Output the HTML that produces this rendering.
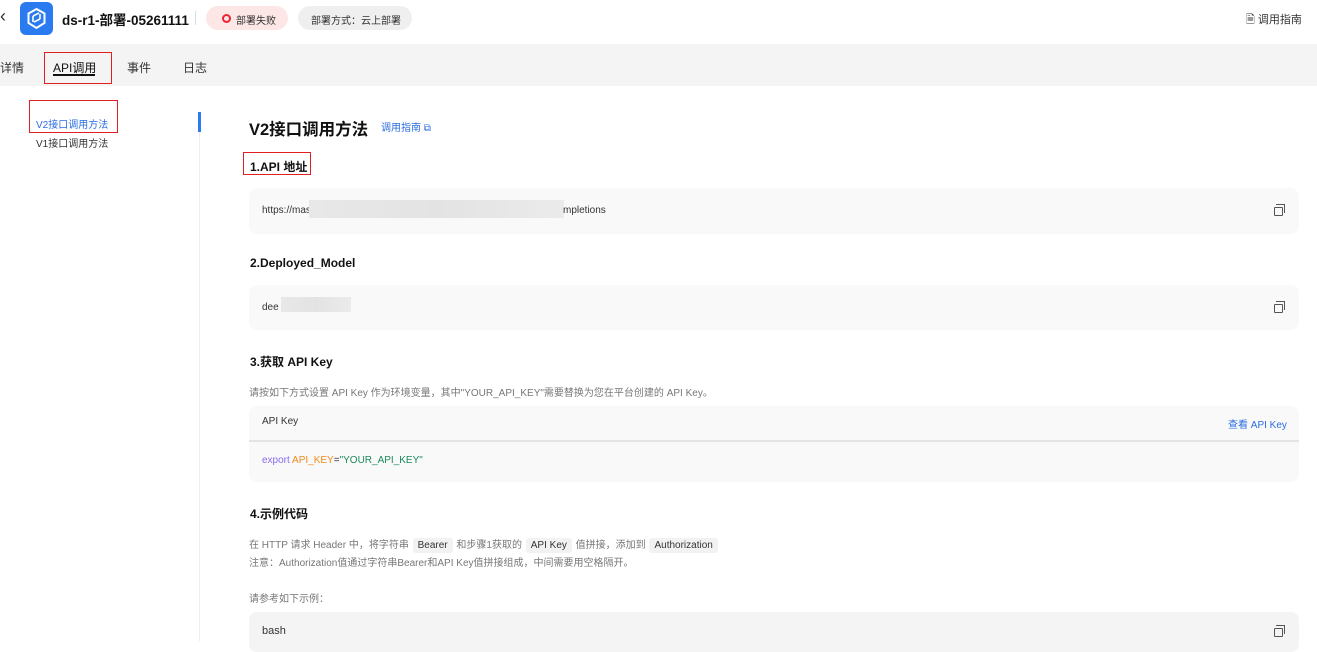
<!DOCTYPE html>
<html><head><meta charset="utf-8"><style>
*{margin:0;padding:0;box-sizing:border-box}
body{width:1317px;height:641px;overflow:hidden;background:#fff;font-family:"Liberation Sans","Noto Sans CJK SC",sans-serif;color:#1f1f1f;position:relative;font-size:12px}
.a{position:absolute;white-space:nowrap}
.box{position:absolute;left:249px;width:1050px;background:#f9f9f9;border-radius:8px}
.h{font-weight:bold;font-size:12px;color:#111}
.blur{position:absolute;background:linear-gradient(90deg,#e8e8e8,#e3e3e3,#ebebeb);}
.cp{position:absolute;width:9px;height:9px;border:1.3px solid #555;border-radius:1px}
.cp:before{content:"";position:absolute;left:1px;top:-4px;width:8px;height:8px;border-top:1.3px solid #555;border-right:1.3px solid #555}
.tag{background:#f2f2f2;border-radius:3px;padding:2px 5px;color:#333;margin:0 1px}
.g{color:#777;font-size:10px}
</style></head><body>
<div class="a" style="left:0;top:6px;font-size:18px;color:#333">‹</div>
<div class="a" style="left:20px;top:2px;width:33px;height:33px;background:#2a7bf0;border-radius:6px"><svg width="33" height="33" viewBox="0 0 33 33"><path d="M16.5 7 L24.5 11.5 V21 L16.5 26 L8.5 21 V11.5 Z" fill="none" stroke="#fff" stroke-width="2"/><path d="M13 14 L19 11 M14 20 L20 17 M13 14 V20 M20 12 V17" stroke="#fff" stroke-width="1.6" fill="none"/></svg></div>
<div class="a" style="left:62px;top:9px;font-size:13.5px;font-weight:bold;color:#111">ds-r1-部署-05261111</div>
<div class="a" style="left:195px;top:11px;width:1px;height:14px;background:#ddd"></div>
<div class="a" style="left:206px;top:6px;width:82px;height:24px;background:#fde7e6;border-radius:12px;font-size:10px;color:#333;padding:6px 0 0 16px"><span style="position:absolute;left:16px;top:8px;width:9px;height:9px;border:2px solid #e23;border-radius:50%"></span><span style="margin-left:14px">部署失败</span></div>
<div class="a" style="left:298px;top:6px;width:114px;height:24px;background:#efefef;border-radius:12px;font-size:10px;color:#333;padding:6px 0 0 13px">部署方式：云上部署</div>
<div class="a" style="left:1246px;top:11px;font-size:11px;color:#333">🗎 调用指南</div>
<div class="a" style="left:0;top:44px;width:1317px;height:42px;background:#f4f4f4"></div>
<div class="a" style="left:0;top:59px;font-size:12px;color:#333">详情</div>
<div class="a" style="left:53px;top:59px;font-size:12px;color:#111">API调用</div>
<div class="a" style="left:53px;top:74px;width:42px;height:2px;background:#111"></div>
<div class="a" style="left:44px;top:52px;width:68px;height:32px;border:1.5px solid #e02020"></div>
<div class="a" style="left:127px;top:59px;font-size:12px;color:#333">事件</div>
<div class="a" style="left:183px;top:59px;font-size:12px;color:#333">日志</div>
<div class="a" style="left:199px;top:112px;width:1px;height:529px;background:#eee"></div>
<div class="a" style="left:198px;top:112px;width:3px;height:20px;background:#2a7bf0"></div>
<div class="a" style="left:36px;top:116px;font-size:10px;color:#2a6de0">V2接口调用方法</div>
<div class="a" style="left:29px;top:100px;width:89px;height:33px;border:1.5px solid #e02020"></div>
<div class="a" style="left:36px;top:135px;font-size:10px;color:#333">V1接口调用方法</div>
<div class="a" style="left:249px;top:116px;font-size:16.5px;font-weight:bold;color:#111">V2接口调用方法</div>
<div class="a" style="left:381px;top:119px;font-size:10px;color:#2a6de0">调用指南 ⧉</div>
<div class="a h" style="left:250px;top:158px">1.API 地址</div>
<div class="a" style="left:243px;top:152px;width:68px;height:23px;border:1.5px solid #e02020"></div>
<div class="box" style="top:188px;height:46px"></div>
<div class="a" style="left:262px;top:205px;font-size:10px;color:#333">https://mas</div>
<div class="blur" style="left:309px;top:200px;width:255px;height:18px"></div>
<div class="a" style="left:563px;top:205px;font-size:10px;color:#333">mpletions</div>
<div class="cp" style="left:1274px;top:207px"></div>
<div class="a h" style="left:250px;top:256px">2.Deployed_Model</div>
<div class="box" style="top:285px;height:45px"></div>
<div class="a" style="left:262px;top:302px;font-size:10px;color:#333">dee</div>
<div class="blur" style="left:281px;top:297px;width:70px;height:15px"></div>
<div class="cp" style="left:1274px;top:304px"></div>
<div class="a h" style="left:250px;top:353px">3.获取 API Key</div>
<div class="a g" style="left:249px;top:384px">请按如下方式设置 API Key 作为环境变量，其中"YOUR_API_KEY"需要替换为您在平台创建的 API Key。</div>
<div class="box" style="top:406px;height:76px"></div>
<div class="a" style="left:249px;top:440px;width:1050px;height:2px;background:#e4e4e4"></div>
<div class="a" style="left:262px;top:416px;font-size:10px;color:#333">API Key</div>
<div class="a" style="left:1228px;top:416px;font-size:10px;color:#2a6de0">查看 API Key</div>
<div class="a" style="left:262px;top:455px;font-size:10px"><span style="color:#8a6cf0">export</span> <span style="color:#f08a1a">API_KEY</span><span style="color:#333">=</span><span style="color:#1a8a5a">"YOUR_API_KEY"</span></div>
<div class="a h" style="left:250px;top:505px">4.示例代码</div>
<div class="a g" style="left:249px;top:536px">在 HTTP 请求 Header 中，将字符串 <span class="tag">Bearer</span> 和步骤1获取的 <span class="tag">API Key</span> 值拼接，添加到 <span class="tag">Authorization</span></div>
<div class="a g" style="left:249px;top:554px">注意：Authorization值通过字符串Bearer和API Key值拼接组成，中间需要用空格隔开。</div>
<div class="a g" style="left:249px;top:590px">请参考如下示例：</div>
<div class="box" style="top:612px;height:40px;background:#f4f4f4"></div>
<div class="a" style="left:262px;top:625px;font-size:11px;color:#333">bash</div>
<div class="cp" style="left:1274px;top:628px"></div>
</body></html>
